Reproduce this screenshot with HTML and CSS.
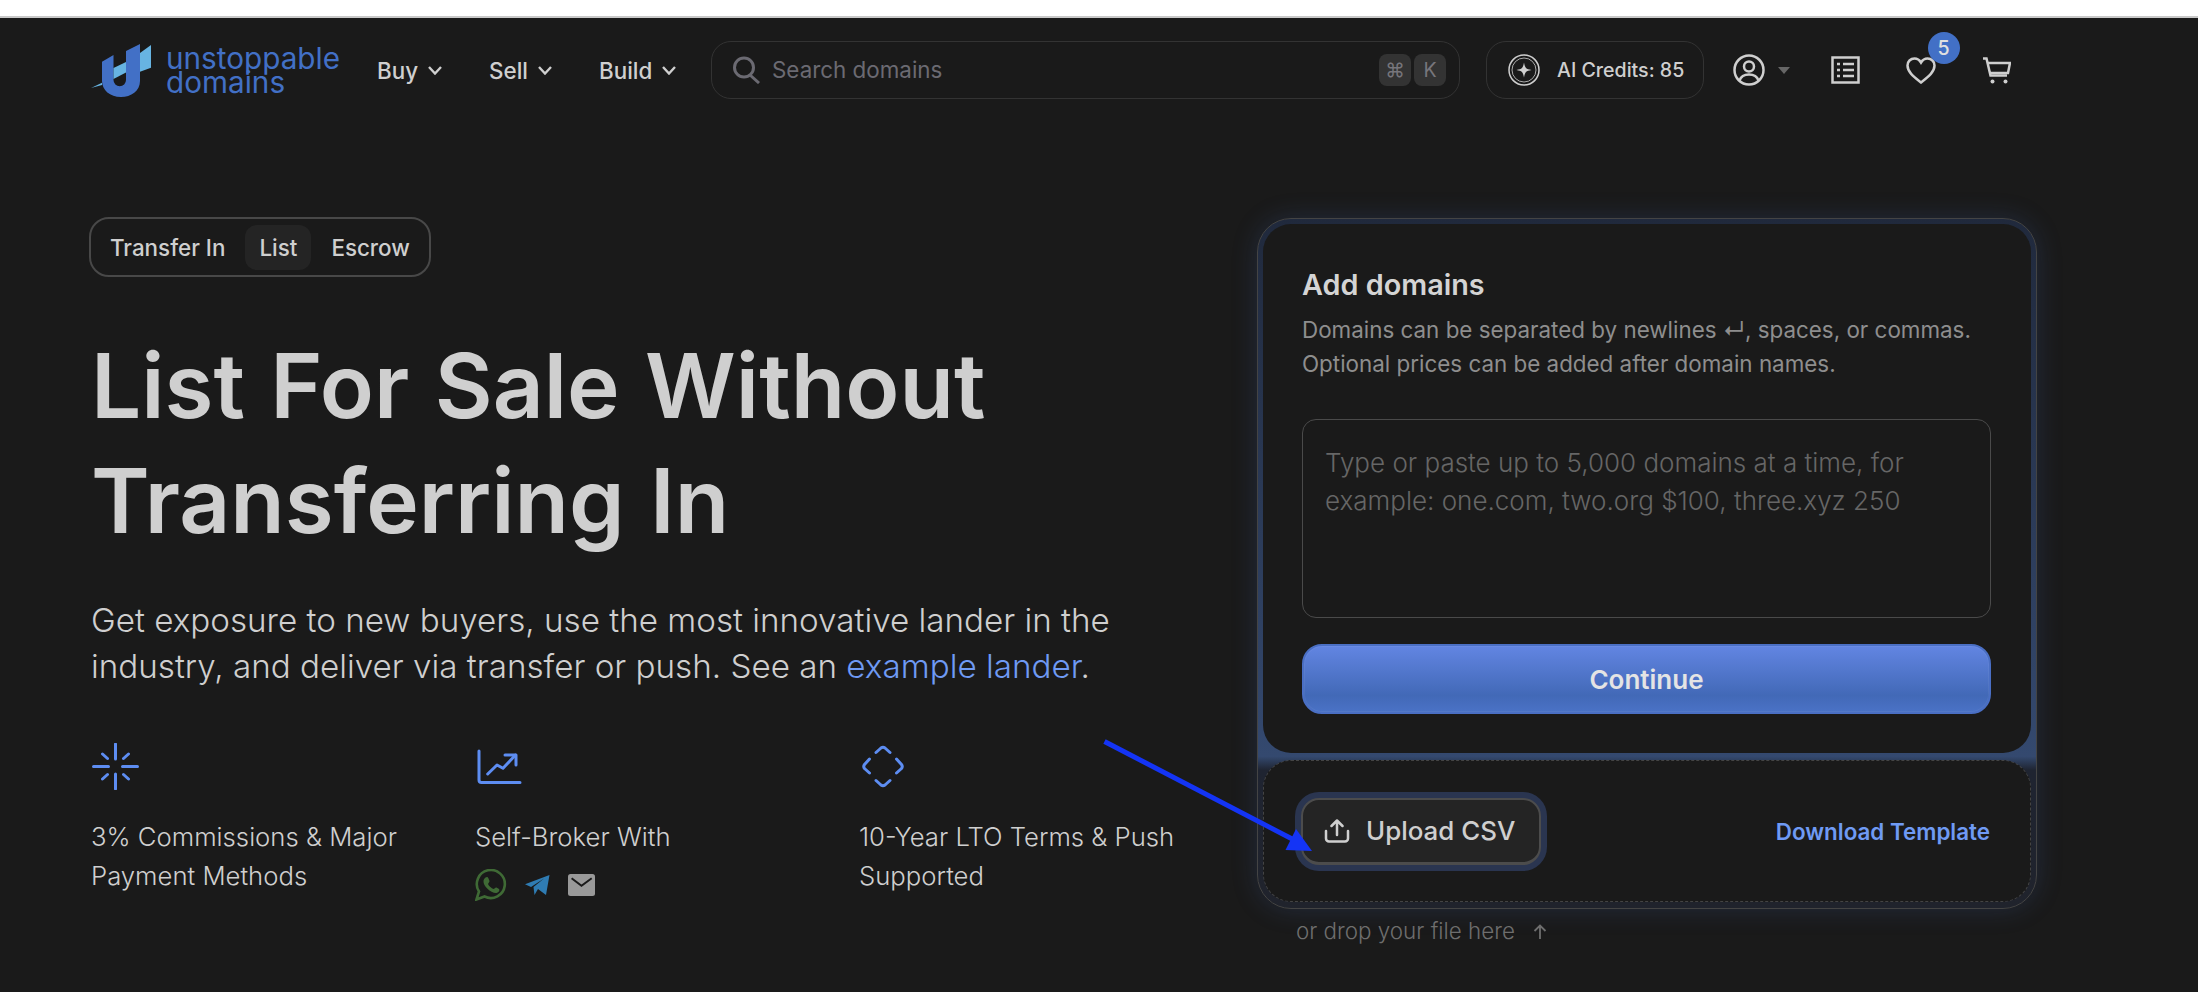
FILE: index.html
```html
<!DOCTYPE html>
<html lang="en">
<head>
<meta charset="utf-8">
<title>List For Sale Without Transferring In</title>
<link rel="stylesheet" href="styles.css">
</head>
<body>
<div class="browser-strip"></div>
<div class="page">
  <header class="header">
    <a class="logo">
      <svg class="logo-mark" viewBox="0 0 60 53" width="60" height="53">
        <path class="logo-light" d="M0 44 L11 38.700 V41Z"/>
        <path class="logo-light" d="M49 9 L60 1 V23.700 L49 27.700Z"/>
        <path class="logo-blue" d="M11 17.700 L22.500 11 V36 a6.250 6.250 0 0 0 12.500 0 V7 L49 0 V37 C49 47 40 53 30 53 C19 53 11 46 11 37Z"/>
        <path class="logo-light" d="M22.500 24 L35 18 V28.500 L22.500 35Z"/>
      </svg>
      <span class="logo-text">unstoppable<br>domains</span>
    </a>
    <nav class="nav">
      <a class="nav-item">Buy<svg viewBox="0 0 14 9" width="14" height="9"><path d="M1 1 7 7.500 13 1" class="stroke-chev"/></svg></a>
      <a class="nav-item">Sell<svg viewBox="0 0 14 9" width="14" height="9"><path d="M1 1 7 7.500 13 1" class="stroke-chev"/></svg></a>
      <a class="nav-item">Build<svg viewBox="0 0 14 9" width="14" height="9"><path d="M1 1 7 7.500 13 1" class="stroke-chev"/></svg></a>
    </nav>
    <div class="search">
      <svg viewBox="0 0 28 28" width="28" height="28" class="search-icon"><circle cx="12" cy="11.500" r="9.500"/><path d="M18 19 27 27"/></svg>
      <span class="search-text">Search domains</span>
      <span class="keys"><kbd class="key">⌘</kbd><kbd class="key">K</kbd></span>
    </div>
    <div class="credits">
      <svg viewBox="0 0 32 32" width="32" height="32" class="credits-icon"><circle cx="16" cy="16" r="15"/><circle cx="16" cy="16" r="12" class="thin"/><path d="M16 8.500 C17 14 18 15 23.500 16 C18 17 17 18 16 23.500 C15 18 14 17 8.500 16 C14 15 15 14 16 8.500Z" class="fill"/></svg>
      <span>AI Credits: 85</span>
    </div>
    <div class="actions">
      <svg viewBox="0 0 32 32" width="32" height="32" class="icon"><circle cx="16" cy="16" r="14.500"/><circle cx="16" cy="12.500" r="5"/><path d="M6.500 26.500 C8 22 11 20.500 16 20.500 C21 20.500 24 22 25.500 26.500"/></svg>
      <span class="caret"></span>
      <svg viewBox="0 0 29 28" width="29" height="28" class="icon list-icon"><rect x="1.500" y="1.500" width="26" height="25"/><path d="M6 8H9M12 8H23M6 14H9M12 14H23M6 20H9M12 20H23"/></svg>
      <span class="heart-wrap">
        <svg viewBox="0 0 30 27" width="30" height="27" class="icon"><path d="M15 25.500 C7.500 19.500 1.500 15 1.500 8.500 C1.500 4.500 4.500 1.500 8.500 1.500 C11 1.500 13.500 3 15 5.500 C16.500 3 19 1.500 21.500 1.500 C25.500 1.500 28.500 4.500 28.500 8.500 C28.500 15 22.500 19.500 15 25.500Z"/></svg>
        <span class="badge">5</span>
      </span>
      <svg viewBox="0 0 29 27" width="29" height="27" class="icon cart-icon"><path d="M1 1.500 H4.500 L8.500 18.500 H25"/><path d="M5.500 6 H28 L26 16 H8"/><circle cx="10.500" cy="24.500" r="2" class="fill"/><circle cx="23.500" cy="24.500" r="2" class="fill"/></svg>
    </div>
  </header>

  <main class="main">
    <section class="intro">
      <div class="tabs">
        <span class="tab">Transfer In</span>
        <span class="tab tab-active">List</span>
        <span class="tab">Escrow</span>
      </div>
      <h1 class="title">List For Sale Without<br>Transferring In</h1>
      <p class="lead">Get exposure to new buyers, use the most innovative lander in the<br>industry, and deliver via transfer or push. See an <a class="lead-link">example lander</a>.</p>
      <div class="features">
        <div class="feature">
          <svg viewBox="1 0 50 47" width="50" height="47" class="feature-icon"><path d="M25.500 1V16M25.500 31V46M3.500 23.500H18.500M32.500 23.500H47.500M12.500 11 17.500 15.500M38.500 11 33.500 15.500M12.500 36 17.500 31.500M38.500 36 33.500 31.500"/></svg>
          <p class="feature-text">3% Commissions &amp; Major<br>Payment Methods</p>
        </div>
        <div class="feature">
          <svg viewBox="1 0 50 47" width="50" height="47" class="feature-icon"><path d="M5 8V37 a2.500 2.500 0 0 0 2.500 2.500H46"/><path d="M13.700 31 23 22 29 25.300 41.500 12"/><path d="M31 12H42V22"/></svg>
          <p class="feature-text">Self-Broker With</p>
          <div class="socials">
            <svg viewBox="0 0 32 32" width="32" height="32" class="wa"><path d="M1.500 30.500 L4 22.500 A14 14 0 1 1 9.500 27.500Z"/><path class="wa-fill" d="M10.500 8.500 C12 7.500 13 8 13.500 9.500 L14.500 12 C14.500 13 13.500 14 13 15 C14 17.500 16.500 19 18.500 20 C19.500 19.500 20.500 18 21.500 18.500 L24 20 C25 21 24 23.500 21.500 24 C16 24.500 8 17 8.500 12 C8.500 10.500 9.500 9.500 10.500 8.500Z"/></svg>
            <svg viewBox="0 0 24.500 20" width="24.500" height="20" class="tg"><path d="M0 9.300 L24.500 0 L21 20 L13 14 L9.500 20 L8.500 12 L19 3.500 L6 12Z"/></svg>
            <svg viewBox="0 0 27 22" width="27" height="22" class="mail"><rect width="27" height="22" rx="2.500"/><path d="M3.600 4.300 L13.500 11.700 L23.700 4.300"/></svg>
          </div>
        </div>
        <div class="feature">
          <svg viewBox="1 0 50 47" width="50" height="47" class="feature-icon"><path d="M18 9.500 L23 5 Q25 3.500 27 5 L32 9.500M11.500 16 L6.500 21.500 Q5 23.500 6.500 25.500 L11.500 30M38.500 16 L43.500 21.500 Q45 23.500 43.500 25.500 L38.500 30M18 37.500 L23 42 Q25 43.500 27 42 L32 37.500"/></svg>
          <p class="feature-text">10-Year LTO Terms &amp; Push<br>Supported</p>
        </div>
      </div>
    </section>

    <section class="side">
      <div class="panel">
        <div class="card">
          <h2 class="card-title">Add domains</h2>
          <p class="card-sub">Domains can be separated by newlines ↵, spaces, or commas.<br>Optional prices can be added after domain names.</p>
          <div class="textarea">Type or paste up to 5,000 domains at a time, for example: one.com, two.org $100, three.xyz 250</div>
          <button class="continue">Continue</button>
        </div>
        <div class="dropzone">
          <button class="upload">
            <svg viewBox="0 0 26 24" width="26" height="24" class="upload-icon"><path d="M13 16V2M7.500 7 13 1.500 18.500 7"/><path d="M2 12V19.500 a3 3 0 0 0 3 3H21 a3 3 0 0 0 3-3V12"/></svg>
            <span>Upload CSV</span>
          </button>
          <a class="template">Download Template</a>
        </div>
      </div>
      <p class="drop-note">or drop your file here<svg viewBox="0 0 14 15" width="14" height="15" class="drop-arrow"><path d="M7 15V1.500M1.500 7 7 1.500 12.500 7"/></svg></p>
    </section>
  </main>

  <svg class="annotation" viewBox="0 0 210 112" width="210" height="112"><path d="M0.500 0.500 L194 101" class="arrow-line"/><path d="M208 110 L181.500 109 L192 88Z" class="arrow-head"/></svg>
</div>
</body>
</html>
```
FILE: styles.css
```css
* { box-sizing: border-box; }
html, body { margin: 0; height: 100%; }
body { background: #1a1a1a; font-family: Inter, "Liberation Sans", sans-serif; color: #cfcfcf; overflow: hidden; }
.browser-strip { height: 18px; background: #fff; border-bottom: 2px solid #c9c9c9; }
.page { position: relative; }
svg { display: block; flex: none; }

.header { display: flex; align-items: center; height: 62px; margin-top: 21px; padding-left: 91px; }
.logo { display: flex; align-items: center; gap: 15px; width: 286px; }
.logo-blue { fill: #4270c6; }
.logo-light { fill: #67b4e2; }
.logo-text { font-size: 29.700px; line-height: 24px; color: #4270c6; }
.nav { display: flex; gap: 47px; width: 334px; }
.nav-item { display: flex; align-items: center; gap: 10px; font-size: 22.400px; font-weight: 500; color: #cfcfcf; }
.stroke-chev { fill: none; stroke: #cfcfcf; stroke-width: 2.400; }
.search { display: flex; align-items: center; width: 749px; height: 58px; border: 1px solid #333; border-radius: 20px; padding: 0 13px 0 20px; }
.search-icon { fill: none; stroke: #6b6a72; stroke-width: 3; margin-right: 13px; }
.search-text { font-size: 22.400px; color: #6b6a72; flex: 1; padding-bottom: 2px; margin-left: -1px; }
.keys { display: flex; gap: 3px; }
.key { display: flex; align-items: center; justify-content: center; width: 32px; height: 32px; background: #333; border-radius: 8px; font: 19.600px Inter, "DejaVu Sans", sans-serif; color: #77767c; }
.credits { display: flex; align-items: center; gap: 17px; width: 218px; height: 58px; border: 1px solid #333; border-radius: 20px; padding-left: 21px; margin-left: 26px; font-size: 19.600px; font-weight: 500; color: #cfcfcf; white-space: nowrap; }
.credits-icon { fill: none; stroke: #cfcfcf; stroke-width: 1.500; }
.credits-icon .thin { stroke-width: .8; }
.credits-icon .fill { fill: #cfcfcf; stroke: none; }
.actions { display: flex; align-items: center; margin-left: 29px; }
.icon { fill: none; stroke: #cfcfcf; stroke-width: 2.500; }
.icon .fill { fill: #cfcfcf; stroke: none; }
.caret { width: 0; height: 0; border-left: 6px solid transparent; border-right: 6px solid transparent; border-top: 7px solid #666; margin-left: 13px; }
.list-icon { margin-left: 41px; }
.heart-wrap { position: relative; margin-left: 46px; }
.badge { position: absolute; left: 21.500px; top: -24.700px; width: 32px; height: 32px; border-radius: 50%; background: #4270c6; color: #e0e0e0; font-size: 19.600px; font-weight: 500; display: flex; align-items: center; justify-content: center; }
.cart-icon { margin-left: 45.500px; }

.main { display: flex; padding-left: 91px; margin-top: 116px; }
.intro { width: 1166px; }
.tabs { display: inline-flex; align-items: center; gap: 6px; height: 60px; margin-left: -2px; padding: 0 5px; border: 2px solid #484848; border-radius: 20px; }
.tab { padding: 0 14px; height: 45px; line-height: 45px; border-radius: 12px; font-size: 22.400px; font-weight: 500; color: #cfcfcf; white-space: nowrap; }
.tab-active { background: #242424; }
.title { margin: 51px 0 0; font-size: 89px; line-height: 115px; font-weight: 600; word-spacing: 3px; color: #cfcfcf; }
.lead { margin: 38.500px 0 0; font-size: 33.200px; line-height: 46px; font-weight: 300; color: #cfcfcf; }
.lead-link { color: #6f9af4; }
.features { display: grid; grid-template-columns: 384px 384px 340px; margin-top: 54.500px; }
.feature-icon { fill: none; stroke: #5d8df2; stroke-width: 3; stroke-linecap: round; stroke-linejoin: round; }
.feature-text { margin: 26.500px 0 0; font-size: 25.700px; line-height: 39px; font-weight: 300; color: #cfcfcf; }
.socials { display: flex; align-items: center; gap: 18px; margin-top: 13.500px; }
.wa { fill: none; stroke: #3f6a35; stroke-width: 2.600; }
.wa .wa-fill { fill: #3f6a35; stroke: none; }
.tg { fill: #2f7cb3; }
.mail rect { fill: #999; }
.mail path { fill: none; stroke: #1a1a1a; stroke-width: 2; }

.side { width: 780px; margin-top: 1px; }
.panel { display: flex; flex-direction: column; gap: 7px; padding: 5px 5px 6px; border: 1px solid #444; border-radius: 34px; background: linear-gradient(180deg, #20293c, #34496f 78%, #1f2431 80%, #20232c); box-shadow: 0 0 26px rgba(70,105,180,.22); }
.card { background: #1a1a1a; border-radius: 28px; height: 529px; padding: 44px 40px 0 39px; display: flex; flex-direction: column; }
.card-title { margin: 0; font-size: 28.800px; line-height: 34px; font-weight: 600; color: #d4d4d4; }
.card-sub { margin: 11px 0 0; font-size: 22.400px; line-height: 33.600px; color: #8e8e8e; }
.textarea { height: 199px; margin-top: 39px; border: 1px solid #4a4a4a; border-radius: 14px; padding: 24px 22px; font-size: 26px; line-height: 38px; font-weight: 300; color: #666; }
.continue { height: 70px; margin-top: 26px; width: 100%; border: 2px solid #4a6fc4; border-radius: 20px; background: linear-gradient(180deg, #6285e2, #4269b7 75%, #4a72c6); box-shadow: inset 0 0 0 1px rgba(255,255,255,.05); color: #e4e4e4; font: 600 26px Inter, sans-serif; }
.dropzone { display: flex; align-items: center; justify-content: space-between; height: 142px; background: #1a1a1a; border: 1px dashed #444; border-radius: 28px; padding: 0 40px 0 37px; }
.upload { display: flex; align-items: center; gap: 16px; width: 240px; height: 67px; padding: 0 0 0 21px; background: #242424; border: 2px solid #4c4c4c; border-bottom-width: 3px; border-radius: 18px; box-shadow: 0 0 0 6px #2a3550; color: #cfcfcf; font: 500 25.900px Inter, sans-serif; white-space: nowrap; }
.upload-icon { fill: none; stroke: #cfcfcf; stroke-width: 2.500; stroke-linecap: round; stroke-linejoin: round; }
.template { font-size: 22.400px; font-weight: 600; color: #6f9af4; }
.drop-note { display: flex; align-items: center; gap: 18px; margin: 7px 0 0 39px; font-size: 22.400px; line-height: 30px; font-weight: 300; color: #6e6e6e; }
.drop-arrow { fill: none; stroke: #6e6e6e; stroke-width: 1.800; }
.annotation { position: absolute; left: 1104px; top: 702px; overflow: visible; }
.arrow-line { fill: none; stroke: #1434f5; stroke-width: 5; }
.arrow-head { fill: #1434f5; }
```
